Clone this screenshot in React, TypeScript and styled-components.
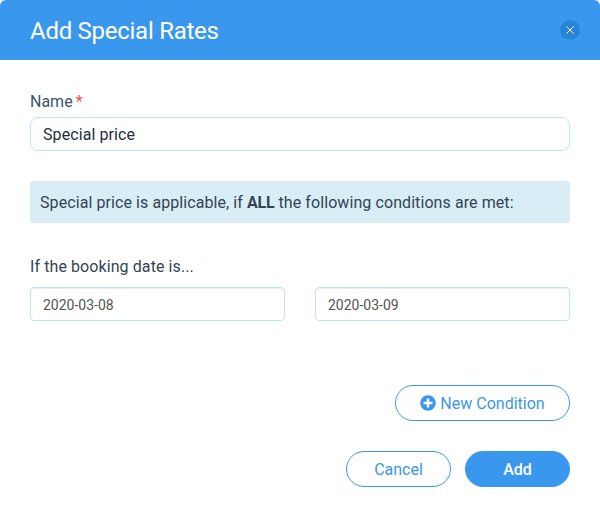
import React from "react";
import styled, { createGlobalStyle } from "styled-components";
import { FaPlusCircle } from "react-icons/fa";

const GlobalStyle = createGlobalStyle`
  * { box-sizing: border-box; }
  body { margin: 0; background: #f4f4f4; }
  body, input, button { font-family: Roboto, "Liberation Sans", sans-serif; }
`;

const Dialog = styled.form`
  height: 511px;
  background: #fff;
  border-radius: 6px 6px 0 0;
  overflow: hidden;
  color: #334452;
  font-size: 16px;
  line-height: 22px;
`;

const Header = styled.header`
  display: flex;
  align-items: center;
  justify-content: space-between;
  height: 60px;
  padding: 0 20px 0 30px;
  background: #3998ed;
`;

const Title = styled.h1`
  margin: 0;
  padding-top: 2px;
  color: #fff;
  font-size: 24px;
  font-weight: 400;
  letter-spacing: -0.27px;
  line-height: 30px;
`;

const CloseButton = styled.button`
  display: flex;
  align-items: center;
  justify-content: center;
  width: 20px;
  height: 20px;
  padding: 0;
  border: 0;
  border-radius: 50%;
  background: #2685d9;
`;

const Body = styled.div`
  padding: 31px 30px 0;
`;

const Label = styled.label`
  display: block;
  height: 26px;
  color: #3a566d;
`;

const Required = styled.span`
  margin-left: 3px;
  color: #ff4c52;
`;

const Input = styled.input<{ $compact?: boolean }>`
  display: block;
  width: 100%;
  height: 34px;
  padding: ${(p) => (p.$compact ? "3px 12px 1px" : "1px 12px")};
  border: 1px solid #bfe1fb;
  border-radius: ${(p) => (p.$compact ? 4 : 8)}px;
  outline: 0;
  background: #fff;
  color: ${(p) => (p.$compact ? "#555" : "#222f3b")};
  font-size: ${(p) => (p.$compact ? 14 : 16)}px;
  letter-spacing: ${(p) => (p.$compact ? "normal" : "0.08px")};
  box-shadow: ${(p) => (p.$compact ? "inset 0 1px 1px rgba(0, 0, 0, 0.075)" : "none")};
`;

const Notice = styled.p`
  height: 42px;
  margin: 30px 0 33px;
  padding: 11px 10px 9px;
  border-radius: 3px;
  background: #d9edf6;
  letter-spacing: 0.08px;

  b { letter-spacing: -0.2px; }
`;

const ConditionTitle = styled.div`
  height: 31px;
  letter-spacing: 0.09px;
`;

const DateRow = styled.div`
  display: grid;
  grid-template-columns: 1fr 1fr;
  gap: 30px;
`;

const Actions = styled.div<{ $top: number }>`
  display: flex;
  justify-content: flex-end;
  gap: 14px;
  margin-top: ${(p) => p.$top}px;
`;

const Button = styled.button<{ $wide?: boolean; $primary?: boolean }>`
  display: flex;
  align-items: center;
  justify-content: center;
  gap: 4px;
  width: ${(p) => (p.$wide ? 175 : 105)}px;
  height: 36px;
  padding: 1px 0 0;
  border: 1px solid #3998ed;
  border-radius: 18px;
  background: ${(p) => (p.$primary ? "#3998ed" : "#fff")};
  color: ${(p) => (p.$primary ? "#fff" : "#3998ed")};
  font-size: 16px;
  font-weight: ${(p) => (p.$primary ? 500 : 400)};

  svg { margin-top: -1px; }
`;

export default function App() {
  return (
    <>
      <GlobalStyle />
      <Dialog>
        <Header>
          <Title>Add Special Rates</Title>
          <CloseButton type="button" aria-label="Close">
            <svg width="8" height="8" viewBox="0 0 8 8" stroke="#fff" strokeWidth="1">
              <path d="M0 0L8 8M8 0L0 8" />
            </svg>
          </CloseButton>
        </Header>
        <Body>
          <Label htmlFor="rate-name">
            Name<Required>*</Required>
          </Label>
          <Input id="rate-name" defaultValue="Special price" />
          <Notice>
            Special price is applicable, if <b>ALL</b> the following conditions are met:
          </Notice>
          <ConditionTitle>If the booking date is...</ConditionTitle>
          <DateRow>
            <Input $compact aria-label="From" defaultValue="2020-03-08" />
            <Input $compact aria-label="To" defaultValue="2020-03-09" />
          </DateRow>
          <Actions $top={64}>
            <Button type="button" $wide>
              <FaPlusCircle size={16} />
              <span>New Condition</span>
            </Button>
          </Actions>
          <Actions $top={30}>
            <Button type="button">Cancel</Button>
            <Button type="button" $primary>Add</Button>
          </Actions>
        </Body>
      </Dialog>
    </>
  );
}
